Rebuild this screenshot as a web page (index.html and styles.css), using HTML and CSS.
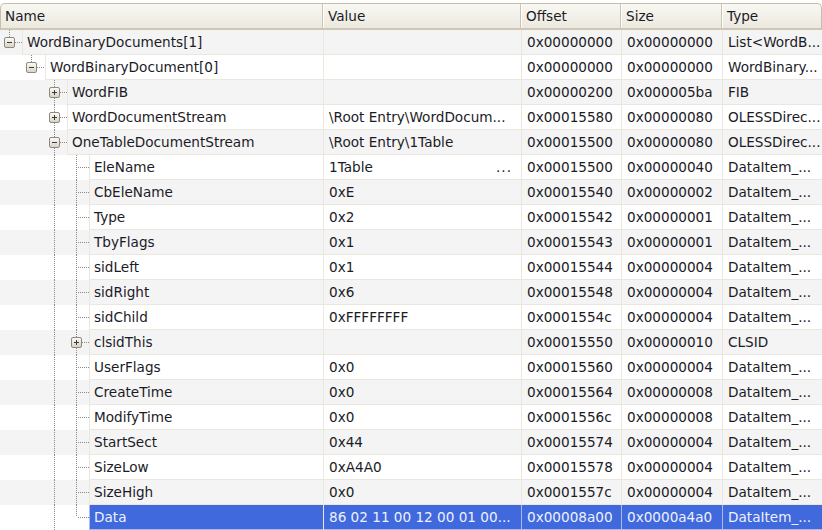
FILE: index.html
```html
<!DOCTYPE html>
<html>
<head>
<meta charset="utf-8">
<link rel="stylesheet" href="styles.css">
</head>
<body>
<div class="grid">
  <div class="head">
    <div class="hc">Name</div>
    <div class="hc">Value</div>
    <div class="hc">Offset</div>
    <div class="hc">Size</div>
    <div class="hc last">Type</div>
  </div>

  <div class="row odd">
    <div class="c name"><span class="sg elbow"><i class="bx minus"></i></span><span class="lbl">WordBinaryDocuments[1]</span></div>
    <div class="c"></div><div class="c">0x00000000</div><div class="c">0x00000000</div><div class="c">List&lt;WordB...</div>
  </div>
  <div class="row">
    <div class="c name"><span class="sg"></span><span class="sg elbow"><i class="bx minus"></i></span><span class="lbl">WordBinaryDocument[0]</span></div>
    <div class="c"></div><div class="c">0x00000000</div><div class="c">0x00000000</div><div class="c">WordBinary...</div>
  </div>
  <div class="row odd">
    <div class="c name"><span class="sg"></span><span class="sg"></span><span class="sg tee"><i class="bx plus"></i></span><span class="lbl">WordFIB</span></div>
    <div class="c"></div><div class="c">0x00000200</div><div class="c">0x000005ba</div><div class="c">FIB</div>
  </div>
  <div class="row">
    <div class="c name"><span class="sg"></span><span class="sg"></span><span class="sg tee"><i class="bx plus"></i></span><span class="lbl">WordDocumentStream</span></div>
    <div class="c">\Root Entry\WordDocum...</div><div class="c">0x00015580</div><div class="c">0x00000080</div><div class="c">OLESSDirec...</div>
  </div>
  <div class="row odd">
    <div class="c name"><span class="sg"></span><span class="sg"></span><span class="sg tee"><i class="bx minus"></i></span><span class="lbl">OneTableDocumentStream</span></div>
    <div class="c">\Root Entry\1Table</div><div class="c">0x00015500</div><div class="c">0x00000080</div><div class="c">OLESSDirec...</div>
  </div>
  <div class="row">
    <div class="c name"><span class="sg"></span><span class="sg"></span><span class="sg pipe"></span><span class="sg tee"></span><span class="lbl">EleName</span></div>
    <div class="c val"><span>1Table</span><span class="more">...</span></div><div class="c">0x00015500</div><div class="c">0x00000040</div><div class="c">DataItem_...</div>
  </div>
  <div class="row odd">
    <div class="c name"><span class="sg"></span><span class="sg"></span><span class="sg pipe"></span><span class="sg tee"></span><span class="lbl">CbEleName</span></div>
    <div class="c">0xE</div><div class="c">0x00015540</div><div class="c">0x00000002</div><div class="c">DataItem_...</div>
  </div>
  <div class="row">
    <div class="c name"><span class="sg"></span><span class="sg"></span><span class="sg pipe"></span><span class="sg tee"></span><span class="lbl">Type</span></div>
    <div class="c">0x2</div><div class="c">0x00015542</div><div class="c">0x00000001</div><div class="c">DataItem_...</div>
  </div>
  <div class="row odd">
    <div class="c name"><span class="sg"></span><span class="sg"></span><span class="sg pipe"></span><span class="sg tee"></span><span class="lbl">TbyFlags</span></div>
    <div class="c">0x1</div><div class="c">0x00015543</div><div class="c">0x00000001</div><div class="c">DataItem_...</div>
  </div>
  <div class="row">
    <div class="c name"><span class="sg"></span><span class="sg"></span><span class="sg pipe"></span><span class="sg tee"></span><span class="lbl">sidLeft</span></div>
    <div class="c">0x1</div><div class="c">0x00015544</div><div class="c">0x00000004</div><div class="c">DataItem_...</div>
  </div>
  <div class="row odd">
    <div class="c name"><span class="sg"></span><span class="sg"></span><span class="sg pipe"></span><span class="sg tee"></span><span class="lbl">sidRight</span></div>
    <div class="c">0x6</div><div class="c">0x00015548</div><div class="c">0x00000004</div><div class="c">DataItem_...</div>
  </div>
  <div class="row">
    <div class="c name"><span class="sg"></span><span class="sg"></span><span class="sg pipe"></span><span class="sg tee"></span><span class="lbl">sidChild</span></div>
    <div class="c">0xFFFFFFFF</div><div class="c">0x0001554c</div><div class="c">0x00000004</div><div class="c">DataItem_...</div>
  </div>
  <div class="row odd">
    <div class="c name"><span class="sg"></span><span class="sg"></span><span class="sg pipe"></span><span class="sg tee"><i class="bx plus"></i></span><span class="lbl">clsidThis</span></div>
    <div class="c"></div><div class="c">0x00015550</div><div class="c">0x00000010</div><div class="c">CLSID</div>
  </div>
  <div class="row">
    <div class="c name"><span class="sg"></span><span class="sg"></span><span class="sg pipe"></span><span class="sg tee"></span><span class="lbl">UserFlags</span></div>
    <div class="c">0x0</div><div class="c">0x00015560</div><div class="c">0x00000004</div><div class="c">DataItem_...</div>
  </div>
  <div class="row odd">
    <div class="c name"><span class="sg"></span><span class="sg"></span><span class="sg pipe"></span><span class="sg tee"></span><span class="lbl">CreateTime</span></div>
    <div class="c">0x0</div><div class="c">0x00015564</div><div class="c">0x00000008</div><div class="c">DataItem_...</div>
  </div>
  <div class="row">
    <div class="c name"><span class="sg"></span><span class="sg"></span><span class="sg pipe"></span><span class="sg tee"></span><span class="lbl">ModifyTime</span></div>
    <div class="c">0x0</div><div class="c">0x0001556c</div><div class="c">0x00000008</div><div class="c">DataItem_...</div>
  </div>
  <div class="row odd">
    <div class="c name"><span class="sg"></span><span class="sg"></span><span class="sg pipe"></span><span class="sg tee"></span><span class="lbl">StartSect</span></div>
    <div class="c">0x44</div><div class="c">0x00015574</div><div class="c">0x00000004</div><div class="c">DataItem_...</div>
  </div>
  <div class="row">
    <div class="c name"><span class="sg"></span><span class="sg"></span><span class="sg pipe"></span><span class="sg tee"></span><span class="lbl">SizeLow</span></div>
    <div class="c">0xA4A0</div><div class="c">0x00015578</div><div class="c">0x00000004</div><div class="c">DataItem_...</div>
  </div>
  <div class="row odd">
    <div class="c name"><span class="sg"></span><span class="sg"></span><span class="sg pipe"></span><span class="sg tee"></span><span class="lbl">SizeHigh</span></div>
    <div class="c">0x0</div><div class="c">0x0001557c</div><div class="c">0x00000004</div><div class="c">DataItem_...</div>
  </div>
  <div class="row sel">
    <div class="c name"><span class="sg"></span><span class="sg"></span><span class="sg pipe"></span><span class="sg elbow"></span><span class="lbl">Data</span></div>
    <div class="c">86 02 11 00 12 00 01 00...</div><div class="c">0x00008a00</div><div class="c">0x0000a4a0</div><div class="c">DataItem_...</div>
  </div>
</div>
</body>
</html>
```

FILE: styles.css
```css
html, body {
  margin: 0;
  padding: 0;
  background: #ffffff;
  overflow: hidden;
}

.grid {
  width: 822px;
  height: 530px;
  overflow: hidden;
  font-family: "DejaVu Sans", Verdana, sans-serif;
  font-size: 13.6px;
  color: #1b1b26;
}

.head {
  display: grid;
  grid-template-columns: 322px 198px 100px 101px 1fr;
  height: 24px;
  margin-top: 3px;
  border: 1px solid #c6bfae;
  border-bottom: 2px solid #cfc7b3;
  border-radius: 5px 5px 0 0;
  background: linear-gradient(#f8f7f2, #ece9df);
}

.hc {
  line-height: 23px;
  padding-top: 1px;
  padding-left: 5px;
  border-right: 1px solid #cbc4b2;
  box-shadow: inset 1px 0 0 #ffffff;
  white-space: nowrap;
}

.hc:first-child {
  padding-left: 4px;
  box-shadow: none;
}

.hc.last {
  border-right: none;
}

.row {
  display: grid;
  grid-template-columns: 324px 198px 100px 101px 1fr;
  height: 25px;
  background: #ffffff;
}

.row.odd {
  background: #f4f4f4;
}

.c {
  line-height: 23px;
  padding-top: 1px;
  padding-left: 5px;
  border-right: 1px solid #ebe7de;
  border-bottom: 1px solid #ebe7de;
  white-space: nowrap;
  overflow: hidden;
}

.c:last-child {
  border-right: none;
}

.c.name {
  display: flex;
  padding-left: 0;
  padding-top: 0;
  border-bottom: none;
}

.lbl {
  flex: 1;
  padding-top: 1px;
  padding-left: 4px;
  border-left: 1px solid #ebe7de;
  border-bottom: 1px solid #ebe7de;
}

.val {
  display: flex;
  justify-content: space-between;
  padding-right: 9px;
}

.more {
  letter-spacing: 1px;
}

/* tree guides */
.sg {
  position: relative;
  flex: none;
  width: 22px;
  height: 25px;
}

.sg:nth-child(2) {
  width: 23px;
}

.pipe::before,
.tee::before,
.elbow::before {
  content: "";
  position: absolute;
  left: 9px;
  top: 0;
  bottom: 0;
  width: 1px;
  background: repeating-linear-gradient(to bottom, #8a8a8a 0 1px, transparent 1px 2px);
}

.elbow::before {
  bottom: auto;
  height: 12px;
}

.tee::after,
.elbow::after {
  content: "";
  position: absolute;
  left: 10px;
  right: 0;
  top: 12px;
  height: 1px;
  background: repeating-linear-gradient(to right, transparent 0 1px, #8a8a8a 1px 2px);
}

.bx {
  position: absolute;
  z-index: 1;
  left: 4px;
  top: 7px;
  width: 11px;
  height: 11px;
  box-sizing: border-box;
  border: 1px solid #8f887b;
  border-radius: 2px;
  background: linear-gradient(#fbfaf7, #d9d3c6);
}

.bx::after {
  content: "";
  position: absolute;
  left: 2px;
  top: 4px;
  width: 5px;
  height: 1px;
  background: #3a3a3a;
}

.bx.plus::before {
  content: "";
  position: absolute;
  left: 4px;
  top: 2px;
  width: 1px;
  height: 5px;
  background: #3a3a3a;
}

/* selection */
.row.sel {
  background: #ffffff;
}

.row.sel .c:not(.name),
.row.sel .lbl {
  background: #3f69dc;
  color: #eef0ff;
  border-color: #aab8ea;
}
```
